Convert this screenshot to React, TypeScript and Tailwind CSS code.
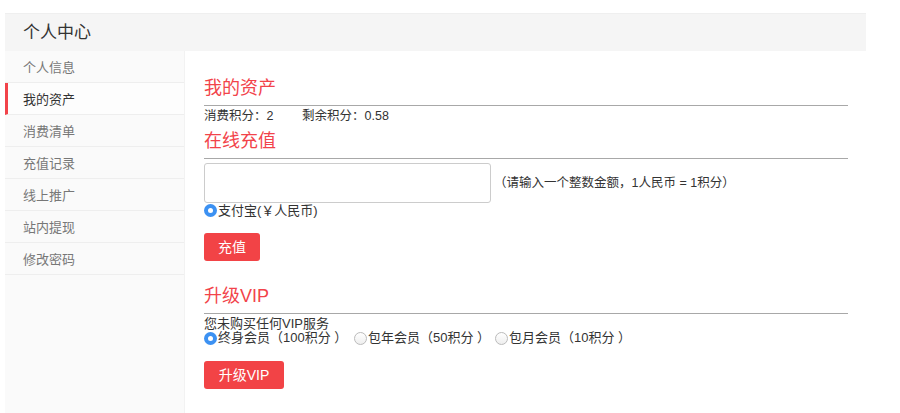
import React from 'react'

const menu = ['个人信息', '我的资产', '消费清单', '充值记录', '线上推广', '站内提现', '修改密码']

function Radio({ checked }: { checked?: boolean }) {
    return checked ? (
        <span className="inline-flex w-[13px] h-[13px] rounded-full bg-[#3c91f2] items-center justify-center shrink-0">
            <span className="w-[5px] h-[5px] rounded-full bg-white" />
        </span>
    ) : (
        <span className="inline-block w-[13px] h-[13px] rounded-full border border-[#bbb] bg-gradient-to-b from-white to-[#eee] shrink-0" />
    )
}

function Heading({ children }: { children: React.ReactNode }) {
    return (
        <div className="border-b border-[#a8a8a8] pb-[3px]">
            <h2 className="text-[18px] leading-[28px] text-[#f2434a]">{children}</h2>
        </div>
    )
}

export default function App() {
    return (
        <div className="w-[900px] h-[413px] bg-white overflow-hidden text-[#333]"
            style={{ fontFamily: '"Liberation Sans", "Noto Sans CJK SC", sans-serif' }}>
            <div className="pt-[13px] pl-[5px] w-[866px]">
                {/* Header */}
                <div className="h-[38px] bg-[#f5f5f5] border-t border-[#efefef] flex items-center pl-[18px]">
                    <span className="text-[17px] text-[#333]">个人中心</span>
                </div>

                <div className="flex h-[362px]">
                    {/* Sidebar */}
                    <div className="w-[180px] shrink-0 bg-[#fafafa] border-r border-[#f2f2f2]">
                        {menu.map((m, i) => (
                            <div key={m}
                                className={i === 1
                                    ? 'h-[32px] flex items-center pl-[15px] pt-[2px] border-b border-[#eee] border-l-[3px] border-l-[#f2434a] bg-[#fdfdfd] text-[13px] text-[#333]'
                                    : 'h-[32px] flex items-center pl-[18px] pt-[2px] border-b border-[#eee] text-[13px] text-[#777]'}>
                                {m}
                            </div>
                        ))}
                    </div>

                    {/* Main */}
                    <div className="flex-1 pl-[19px] pr-[18px] pt-[23px]">
                        <Heading>我的资产</Heading>
                        <div className="text-[12.5px] leading-[21px] flex">
                            <span className="w-[98px]">消费积分：2</span>
                            <span>剩余积分：0.58</span>
                        </div>

                        <Heading>在线充值</Heading>
                        <div className="flex items-center mt-[4px]">
                            <input className="w-[287px] h-[40px] border border-[#ccc] rounded-[3px] outline-none px-2" />
                            <span className="ml-[3px] text-[12.5px]">（请输入一个整数金额，1人民币 = 1积分）</span>
                        </div>
                        <div className="flex items-center gap-[1px] text-[13px] leading-[15px]">
                            <Radio checked />
                            <span>支付宝(￥人民币)</span>
                        </div>
                        <button className="mt-[15px] w-[56px] h-[28px] bg-[#f24346] text-white text-[14px] rounded-[3px]">充值</button>

                        <div className="mt-[21px]">
                            <Heading>升级VIP</Heading>
                        </div>
                        <div className="text-[13px] leading-[15px] mt-[2px]">您未购买任何VIP服务</div>
                        <div className="flex items-center text-[13px] leading-[14px]">
                            <Radio checked />
                            <span className="ml-[1px] w-[136px]">终身会员（100积分 ）</span>
                            <Radio />
                            <span className="ml-[1px] w-[127px]">包年会员（50积分 ）</span>
                            <Radio />
                            <span className="ml-[1px]">包月会员（10积分 ）</span>
                        </div>
                        <button className="mt-[16px] w-[80px] h-[28px] bg-[#f24346] text-white text-[14px] rounded-[3px]">升级VIP</button>
                    </div>
                </div>
            </div>
        </div>
    )
}
